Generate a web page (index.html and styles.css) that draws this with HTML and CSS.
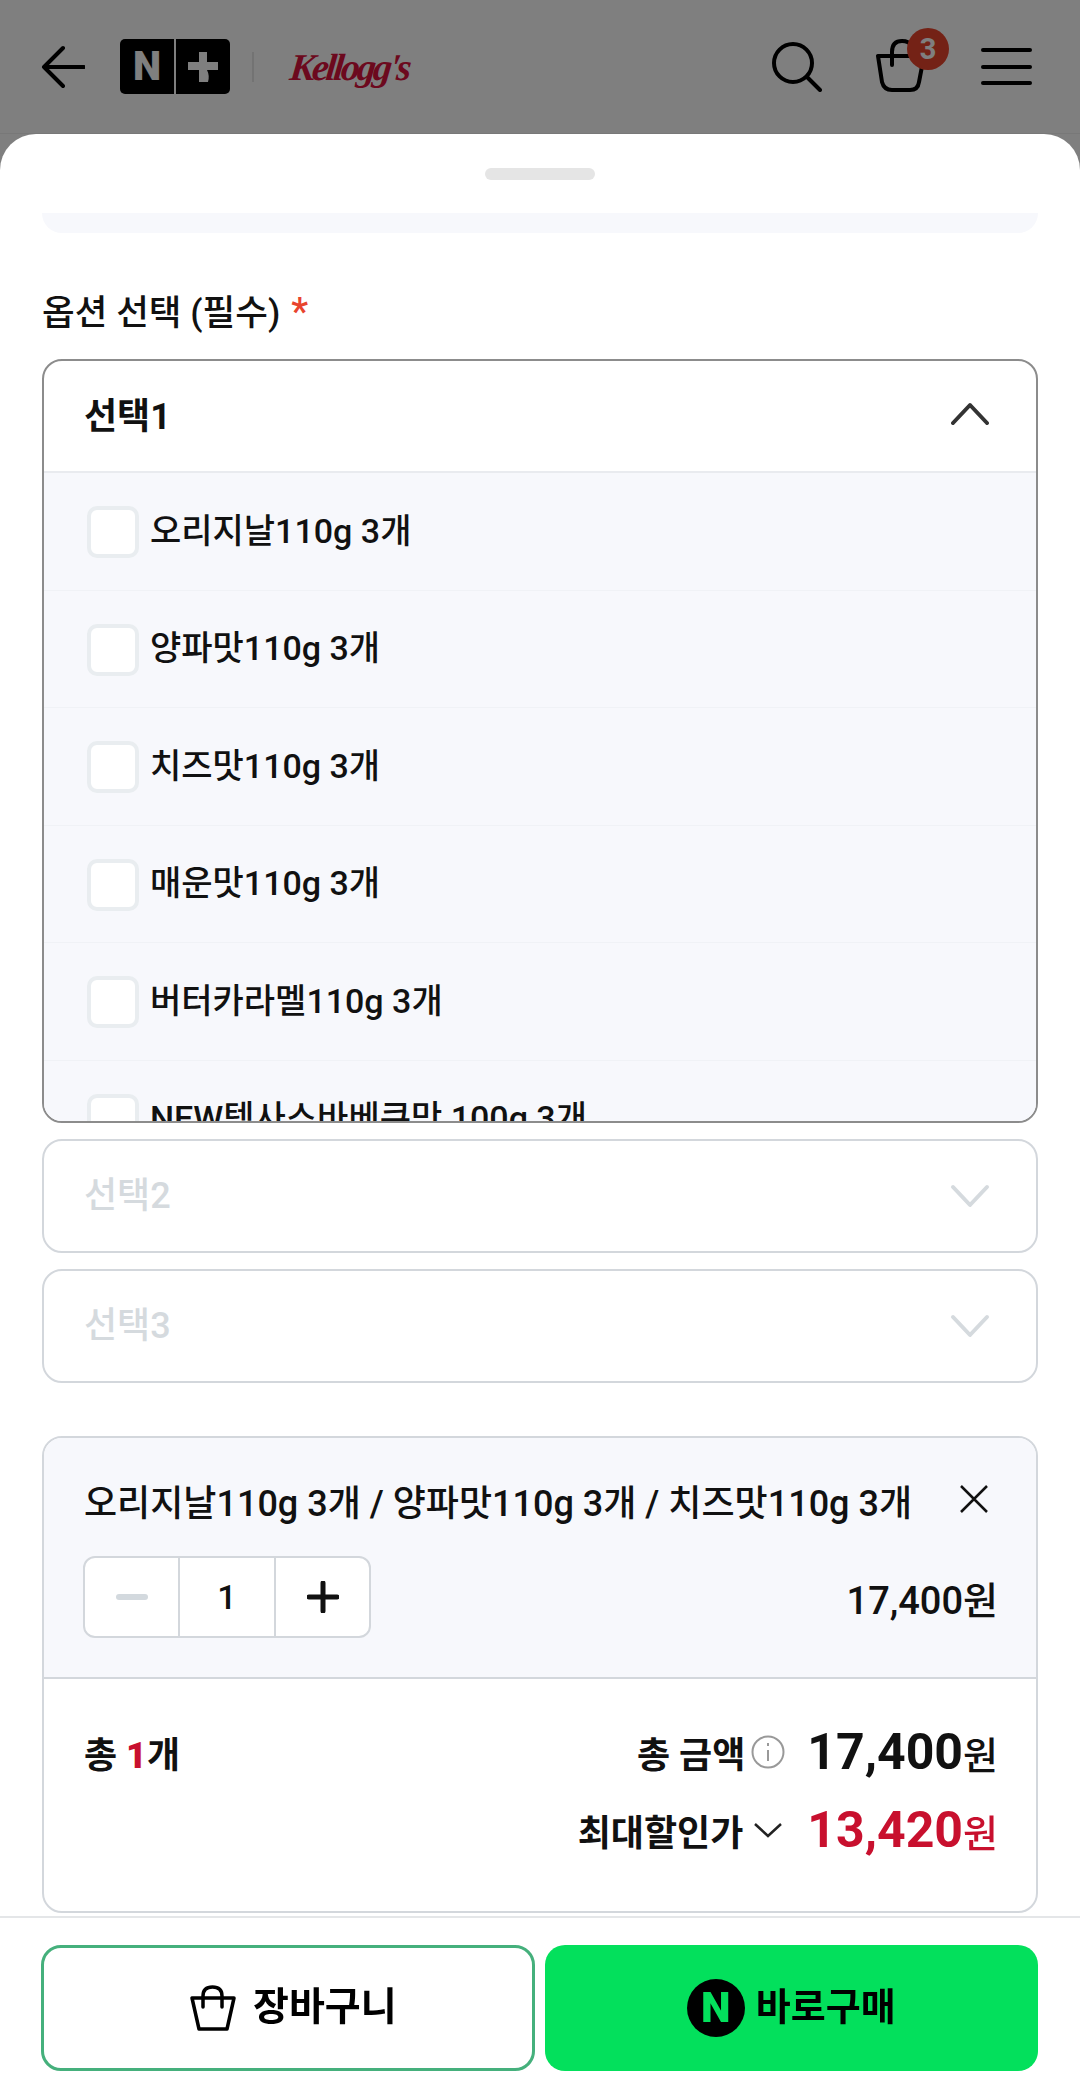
FILE: index.html
```html
<!DOCTYPE html>
<html lang="ko">
<head>
    <meta charset="UTF-8">
    <meta name="viewport" content="width=device-width, initial-scale=1.0">
    <title>옵션 선택</title>
    <link rel="stylesheet" href="styles.css">
</head>
<body>

    <div class="header">
        <svg class="back" width="44" height="44" viewBox="0 0 44 44"><path d="M43 22H3M22 3L3 22l19 19" /></svg>
        <div class="nplus">
            <span class="nplus-tile nplus-n">N</span>
            <span class="nplus-tile">
                <svg width="30" height="30" viewBox="0 0 30 30"><path d="M11 0h8v10h11v8H19a8 12 0 0 1 1 12h-9V18H0v-8h11z" /></svg>
            </span>
        </div>
        <span class="brand-line"></span>
        <span class="brand">Kellogg's</span>
        <div class="header-icons">
            <svg class="icon-search" width="50" height="50" viewBox="0 0 50 50"><circle cx="21" cy="21" r="19" /><path d="M35 35l13 13" /></svg>
            <div class="cart">
                <svg width="50" height="54" viewBox="0 0 50 54"><path d="M2 18h46l-5 26q-1 8-9 8H16q-8 0-10-8zM16 27V14q0-11 10-11 7 0 10 5" /></svg>
                <span class="badge">3</span>
            </div>
            <div class="menu"><span></span><span></span><span></span></div>
        </div>
    </div>
    <div class="dim"></div>

    <div class="sheet">
        <div class="sheet-body">
            <div class="grabber"></div>
            <div class="strip"></div>

            <h2 class="opt-label">옵션 선택 (필수) <span class="star">*</span></h2>

            <div class="dropdown open">
                <div class="dropdown-head">
                    <span>선택1</span>
                    <svg class="chev" width="40" height="24" viewBox="0 0 40 24"><path d="M3 22L20 4l17 18" /></svg>
                </div>
                <ul class="opt-list">
                    <li><span class="check"></span>오리지날110g 3개</li>
                    <li><span class="check"></span>양파맛110g 3개</li>
                    <li><span class="check"></span>치즈맛110g 3개</li>
                    <li><span class="check"></span>매운맛110g 3개</li>
                    <li><span class="check"></span>버터카라멜110g 3개</li>
                    <li><span class="check"></span>NEW텍사스바베큐맛 100g 3개</li>
                </ul>
            </div>

            <div class="dropdown off">
                <span class="off-text">선택2</span>
                <svg class="chev" width="40" height="24" viewBox="0 0 40 24"><path d="M3 3l17 18L37 3" /></svg>
            </div>
            <div class="dropdown off">
                <span class="off-text">선택3</span>
                <svg class="chev" width="40" height="24" viewBox="0 0 40 24"><path d="M3 3l17 18L37 3" /></svg>
            </div>

            <div class="order">
                <div class="order-item">
                    <div class="order-title">
                        <span class="order-name">오리지날110g 3개 / 양파맛110g 3개 / 치즈맛110g 3개</span>
                        <svg class="close" width="30" height="30" viewBox="0 0 30 30"><path d="M2 2l26 26M28 2L2 28" /></svg>
                    </div>
                    <div class="order-row">
                        <div class="qty">
                            <span class="qty-btn"><svg width="32" height="6" viewBox="0 0 32 6"><rect width="32" height="6" rx="3" fill="#d3d9de" /></svg></span>
                            <span class="qty-num">1</span>
                            <span class="qty-btn"><svg width="32" height="32" viewBox="0 0 32 32"><path d="M16 2v28M2 16h28" stroke="#111" stroke-width="5" stroke-linecap="round" /></svg></span>
                        </div>
                        <span class="item-price">17,400원</span>
                    </div>
                </div>
                <div class="order-total">
                    <div class="total-row">
                        <span class="total-count">총 <b>1</b>개</span>
                        <span class="total-label">총 금액</span>
                        <svg class="info" width="34" height="34" viewBox="0 0 34 34"><circle cx="17" cy="17" r="15.5" /><path d="M17 15v11M17 8v3" /></svg>
                        <span class="total-price">17,400<small>원</small></span>
                    </div>
                    <div class="total-row">
                        <span class="total-label">최대할인가</span>
                        <svg class="small-chev" width="30" height="16" viewBox="0 0 30 16"><path d="M2 2l13 12L28 2" /></svg>
                        <span class="total-price red">13,420<small>원</small></span>
                    </div>
                </div>
            </div>
        </div>

        <div class="footer">
            <div class="btn btn-cart">
                <svg width="48" height="46" viewBox="0 0 48 46"><path d="M3 13h42l-7 31H10zM14 22V11q0-9 9.5-9t9.5 9v11" /></svg>
                <span class="btn-text">장바구니</span>
            </div>
            <div class="btn btn-buy">
                <span class="npay">N</span>
                <span class="btn-text">바로구매</span>
            </div>
        </div>
    </div>

</body>
</html>
```

FILE: styles.css
```css
* {
    box-sizing: border-box;
}
body {
    margin: 0;
    height: 2097px;
    overflow: hidden;
    background-color: #fff;
    color: #111;
    font-family: Roboto, "Noto Sans CJK KR", sans-serif;
    font-size: 34px;
}
svg {
    display: block;
    fill: none;
}

/* header, sits under the dim layer */
.header {
    display: flex;
    align-items: center;
    height: 134px;
    padding: 0 48px 0 41px;
    border-bottom: 1px solid #f0f0f0;
}
.back {
    stroke: #000;
    stroke-width: 4;
    stroke-linecap: round;
    stroke-linejoin: round;
}
.nplus {
    display: flex;
    gap: 2px;
    margin-left: 35px;
}
.nplus-tile {
    display: flex;
    align-items: center;
    justify-content: center;
    width: 54px;
    height: 55px;
    background-color: #000;
    border-radius: 5px 0 0 5px;
}
.nplus-tile + .nplus-tile {
    border-radius: 0 5px 5px 0;
}
.nplus-tile svg {
    fill: #fff;
}
.nplus-n {
    color: #fff;
    font-size: 40px;
    font-weight: 900;
}
.brand-line {
    width: 2px;
    height: 30px;
    margin-left: 22px;
    background-color: #e6e6e6;
}
.brand {
    margin-left: 36px;
    color: #d9123c;
    font-family: "Liberation Serif", serif;
    font-size: 38px;
    font-style: italic;
    font-weight: 700;
    letter-spacing: -3px;
    transform: skewX(-6deg);
}
.header-icons {
    display: flex;
    align-items: center;
    margin-left: auto;
}
.icon-search {
    stroke: #000;
    stroke-width: 4;
    stroke-linecap: round;
}
.cart {
    position: relative;
    margin: 0 0 4px 54px;
}
.cart svg {
    stroke: #000;
    stroke-width: 4;
    stroke-linecap: round;
    stroke-linejoin: round;
}
.badge {
    position: absolute;
    top: -10px;
    left: 31px;
    width: 42px;
    height: 42px;
    border-radius: 50%;
    background-color: #e8452c;
    color: #fff;
    font-size: 29px;
    font-weight: 700;
    line-height: 42px;
    text-align: center;
}
.menu {
    display: flex;
    flex-direction: column;
    gap: 12.5px;
    width: 51px;
    margin-left: 55px;
}
.menu span {
    height: 4px;
    border-radius: 2px;
    background-color: #000;
}
.dim {
    position: fixed;
    inset: 0;
    background-color: rgba(0, 0, 0, 0.5);
}

/* bottom sheet */
.sheet {
    position: relative;
    z-index: 2;
    display: flex;
    flex-direction: column;
    height: 1963px;
    overflow: hidden;
    background-color: #fff;
    border-radius: 36px 36px 0 0;
}
.sheet-body {
    flex: 1;
    min-height: 0;
    padding: 0 42px;
}
.grabber {
    width: 110px;
    height: 12px;
    margin: 34px auto 0;
    background-color: #e5e5e5;
    border-radius: 6px;
}
.strip {
    height: 20px;
    margin-top: 33px;
    background-color: #f7f8fc;
    border-radius: 0 0 24px 24px;
}
.opt-label {
    margin: 54px 0 21px;
    font-size: 35.5px;
    font-weight: 500;
    line-height: 50px;
}
.star {
    margin-left: 2px;
    color: #e8442e;
    font-size: 38px;
}

/* dropdowns */
.dropdown {
    margin-bottom: 16px;
    border: 2px solid #d3d7dc;
    border-radius: 20px;
}
.dropdown.open {
    height: 764px;
    overflow: hidden;
    border-color: #8c8c8c;
}
.dropdown-head {
    display: flex;
    align-items: center;
    justify-content: space-between;
    height: 110px;
    padding: 0 46px 6px 40px;
    font-size: 36px;
    font-weight: 700;
}
.dropdown.off {
    display: flex;
    align-items: center;
    justify-content: space-between;
    height: 114px;
    padding: 0 46px 0 40px;
    color: #d5dade;
    font-size: 36px;
    font-weight: 500;
}
.off-text {
    margin-bottom: 8px;
}
.chev {
    stroke: #333;
    stroke-width: 4;
    stroke-linecap: round;
    stroke-linejoin: round;
}
.off .chev {
    stroke: #d5dade;
}
.opt-list {
    margin: 0;
    padding: 0;
    list-style: none;
    background-color: #f7f8fc;
    border-top: 2px solid #e9ebef;
}
.opt-list li {
    display: flex;
    align-items: center;
    gap: 11px;
    height: 117.5px;
    padding: 0 0 6px 43px;
    border-bottom: 1px solid #f0f2f6;
    font-weight: 500;
}
.check {
    width: 52px;
    height: 52px;
    margin-top: 8px;
    background-color: #fff;
    border: 4px solid #e9edf0;
    border-radius: 10px;
}

/* selected option box */
.order {
    height: 477px;
    margin-top: 53px;
    border: 2px solid #d3d7dc;
    border-radius: 20px;
}
.order-item {
    padding: 37px 38px 39px 40px;
    background-color: #f7f8fc;
    border-bottom: 2px solid #d3d7dc;
    border-radius: 18px 18px 0 0;
}
.order-title {
    display: flex;
    align-items: center;
    justify-content: space-between;
    font-size: 36px;
    font-weight: 500;
    line-height: 50px;
}
.order-name {
    margin-top: 4px;
}
.close {
    margin: -6px 9px 0 0;
    stroke: #111;
    stroke-width: 2.5;
}
.order-row {
    display: flex;
    align-items: center;
    justify-content: space-between;
    margin-top: 27px;
}
.qty {
    display: flex;
    height: 82px;
    margin-left: -1px;
    background-color: #fff;
    border: 2px solid #d3d7dc;
    border-radius: 12px;
}
.qty-btn,
.qty-num {
    display: flex;
    align-items: center;
    justify-content: center;
    width: 93px;
}
.qty-num {
    width: 98px;
    border-left: 2px solid #d3d7dc;
    border-right: 2px solid #d3d7dc;
    font-weight: 500;
}
.item-price {
    font-size: 38px;
    font-weight: 500;
}
.order-total {
    padding: 48px 38px 0 40px;
}
.total-row {
    display: flex;
    align-items: center;
    justify-content: flex-end;
    height: 50px;
    margin-bottom: 28px;
    font-size: 36px;
    font-weight: 700;
}
.total-count {
    margin-right: auto;
}
.total-count b {
    color: #c8102e;
}
.info {
    margin: 0 22px 0 6px;
    stroke: #999;
    stroke-width: 2;
}
.small-chev {
    margin: 0 24px 0 10px;
    stroke: #222;
    stroke-width: 2.5;
}
.total-price {
    font-size: 50px;
    font-weight: 700;
}
.total-price small {
    font-size: 38px;
    font-weight: 500;
}
.red {
    color: #c8102e;
}

/* footer buttons */
.footer {
    display: flex;
    gap: 10px;
    height: 181px;
    padding: 27px 42px 26px 41px;
    background-color: #fff;
    border-top: 2px solid #e4e6e8;
}
.btn {
    display: flex;
    flex: 1 1 50%;
    align-items: center;
    justify-content: center;
    height: 126px;
    border-radius: 20px;
    color: #000;
    font-size: 38px;
    font-weight: 700;
}
.btn-text {
    margin-bottom: 10px;
}
.btn-cart {
    gap: 16px;
    padding-left: 10px;
    border: 3px solid #45b07c;
    font-size: 39px;
}
.btn-cart svg {
    stroke: #000;
    stroke-width: 3.5;
    stroke-linejoin: round;
    stroke-linecap: round;
}
.btn-buy {
    gap: 11px;
    background-color: #03e05c;
}
.npay {
    width: 58px;
    height: 58px;
    border-radius: 50%;
    background-color: #000;
    color: #03e05c;
    font-size: 42px;
    font-weight: 900;
    line-height: 58px;
    text-align: center;
}
```
